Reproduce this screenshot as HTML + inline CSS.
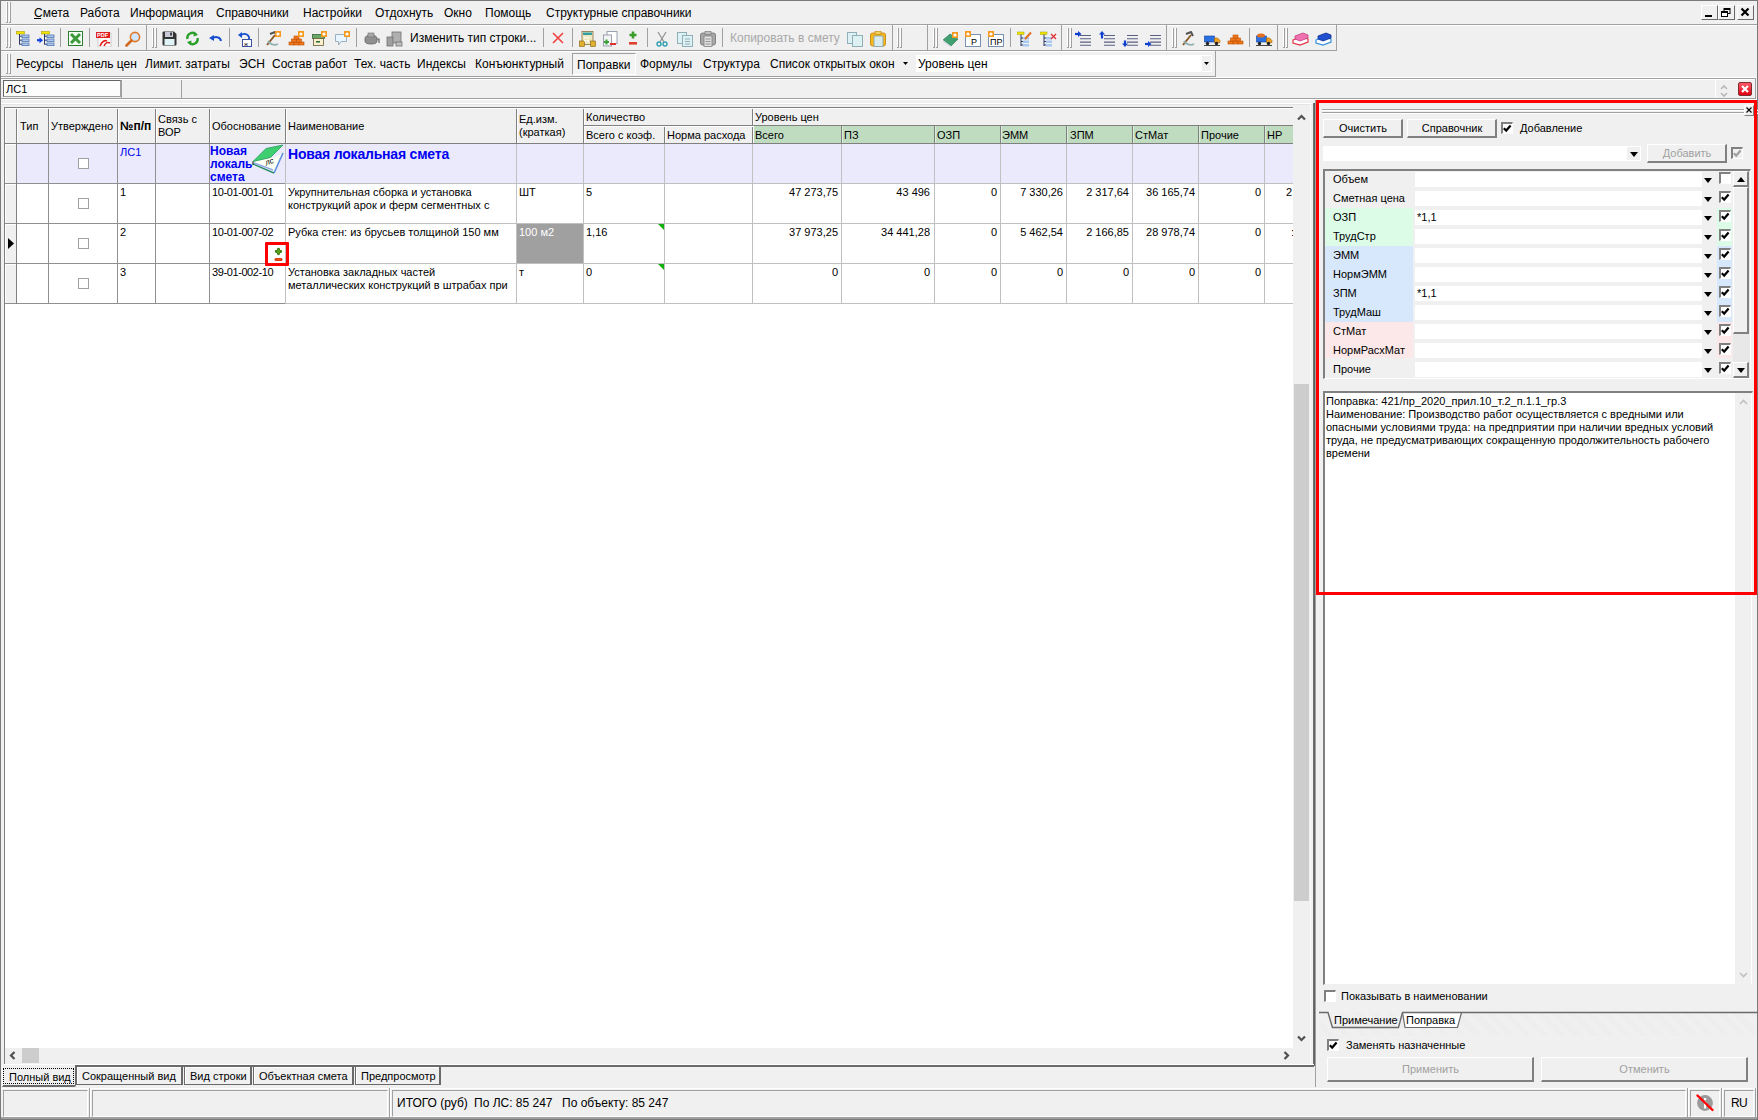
<!DOCTYPE html><html><head><meta charset="utf-8"><style>
html,body{margin:0;padding:0}
body{width:1758px;height:1120px;overflow:hidden;background:#f0f0f0;position:relative;font-family:"Liberation Sans",sans-serif}
div,span,svg{position:absolute;box-sizing:border-box}
.t{white-space:nowrap}
</style></head><body>
<div style="left:0px;top:0px;width:1758px;height:1px;background:#7a7a7a"></div>
<div style="left:0px;top:0px;width:1px;height:1120px;background:#7a7a7a"></div>
<div style="left:1757px;top:0px;width:1px;height:1120px;background:#7a7a7a"></div>
<div style="left:6px;top:2px;width:1px;height:21px;background:#ffffff"></div>
<div style="left:7px;top:2px;width:1px;height:21px;background:#a0a0a0"></div>
<div style="left:6px;top:22px;width:1px;height:1px;background:#a0a0a0"></div>
<div style="left:9px;top:2px;width:1px;height:21px;background:#ffffff"></div>
<div style="left:10px;top:2px;width:1px;height:21px;background:#a0a0a0"></div>
<div style="left:9px;top:22px;width:1px;height:1px;background:#a0a0a0"></div>
<div style="left:1px;top:24px;width:1756px;height:1px;background:#a0a0a0"></div>
<div style="left:1px;top:25px;width:1756px;height:1px;background:#ffffff"></div>
<span class="t" style="left:34px;top:7px;font-size:12px;line-height:12px;font-weight:400;color:#000;">Смета</span>
<span class="t" style="left:80px;top:7px;font-size:12px;line-height:12px;font-weight:400;color:#000;">Работа</span>
<span class="t" style="left:130px;top:7px;font-size:12px;line-height:12px;font-weight:400;color:#000;">Информация</span>
<span class="t" style="left:216px;top:7px;font-size:12px;line-height:12px;font-weight:400;color:#000;">Справочники</span>
<span class="t" style="left:303px;top:7px;font-size:12px;line-height:12px;font-weight:400;color:#000;">Настройки</span>
<span class="t" style="left:375px;top:7px;font-size:12px;line-height:12px;font-weight:400;color:#000;">Отдохнуть</span>
<span class="t" style="left:444px;top:7px;font-size:12px;line-height:12px;font-weight:400;color:#000;">Окно</span>
<span class="t" style="left:485px;top:7px;font-size:12px;line-height:12px;font-weight:400;color:#000;">Помощь</span>
<span class="t" style="left:546px;top:7px;font-size:12px;line-height:12px;font-weight:400;color:#000;">Структурные справочники</span>
<div style="left:34px;top:18px;width:7px;height:1px;background:#000"></div>
<div style="left:1701px;top:5px;width:17px;height:15px;background:#f0f0f0;border-top:1px solid #fff;border-left:1px solid #fff;border-right:1px solid #6a6a6a;border-bottom:1px solid #6a6a6a"></div>
<div style="left:1718px;top:5px;width:17px;height:15px;background:#f0f0f0;border-top:1px solid #fff;border-left:1px solid #fff;border-right:1px solid #6a6a6a;border-bottom:1px solid #6a6a6a"></div>
<div style="left:1737px;top:5px;width:17px;height:15px;background:#f0f0f0;border-top:1px solid #fff;border-left:1px solid #fff;border-right:1px solid #6a6a6a;border-bottom:1px solid #6a6a6a"></div>
<div style="left:1705px;top:15px;width:7px;height:2px;background:#000"></div>
<svg style="position:absolute;left:1721px;top:8px" width="11" height="10" viewBox="0 0 11 10"><rect x="3" y="0.5" width="6" height="5" fill="none" stroke="#000" stroke-width="1"/><rect x="3" y="0" width="6" height="2" fill="#000"/><rect x="0.5" y="3.5" width="6" height="5" fill="#fff" stroke="#000" stroke-width="1"/><rect x="0" y="3" width="7" height="2" fill="#000"/></svg>
<svg style="position:absolute;left:1740px;top:7px" width="10" height="10" viewBox="0 0 10 10"><path d="M1.5 1.5L8.5 8.5M8.5 1.5L1.5 8.5" stroke="#000" stroke-width="2.2"/></svg>
<div style="left:1px;top:50px;width:1336px;height:1px;background:#a0a0a0"></div>
<div style="left:1px;top:51px;width:1215px;height:1px;background:#ffffff"></div>
<div style="left:1336px;top:25px;width:1px;height:26px;background:#a0a0a0"></div>
<div style="left:6px;top:28px;width:1px;height:20px;background:#ffffff"></div>
<div style="left:7px;top:28px;width:1px;height:20px;background:#a0a0a0"></div>
<div style="left:6px;top:47px;width:1px;height:1px;background:#a0a0a0"></div>
<div style="left:9px;top:28px;width:1px;height:20px;background:#ffffff"></div>
<div style="left:10px;top:28px;width:1px;height:20px;background:#a0a0a0"></div>
<div style="left:9px;top:47px;width:1px;height:1px;background:#a0a0a0"></div>
<div style="left:152px;top:28px;width:1px;height:20px;background:#ffffff"></div>
<div style="left:153px;top:28px;width:1px;height:20px;background:#a0a0a0"></div>
<div style="left:152px;top:47px;width:1px;height:1px;background:#a0a0a0"></div>
<div style="left:155px;top:28px;width:1px;height:20px;background:#ffffff"></div>
<div style="left:156px;top:28px;width:1px;height:20px;background:#a0a0a0"></div>
<div style="left:155px;top:47px;width:1px;height:1px;background:#a0a0a0"></div>
<div style="left:897px;top:28px;width:1px;height:20px;background:#ffffff"></div>
<div style="left:898px;top:28px;width:1px;height:20px;background:#a0a0a0"></div>
<div style="left:897px;top:47px;width:1px;height:1px;background:#a0a0a0"></div>
<div style="left:900px;top:28px;width:1px;height:20px;background:#ffffff"></div>
<div style="left:901px;top:28px;width:1px;height:20px;background:#a0a0a0"></div>
<div style="left:900px;top:47px;width:1px;height:1px;background:#a0a0a0"></div>
<div style="left:933px;top:28px;width:1px;height:20px;background:#ffffff"></div>
<div style="left:934px;top:28px;width:1px;height:20px;background:#a0a0a0"></div>
<div style="left:933px;top:47px;width:1px;height:1px;background:#a0a0a0"></div>
<div style="left:936px;top:28px;width:1px;height:20px;background:#ffffff"></div>
<div style="left:937px;top:28px;width:1px;height:20px;background:#a0a0a0"></div>
<div style="left:936px;top:47px;width:1px;height:1px;background:#a0a0a0"></div>
<div style="left:1067px;top:28px;width:1px;height:20px;background:#ffffff"></div>
<div style="left:1068px;top:28px;width:1px;height:20px;background:#a0a0a0"></div>
<div style="left:1067px;top:47px;width:1px;height:1px;background:#a0a0a0"></div>
<div style="left:1070px;top:28px;width:1px;height:20px;background:#ffffff"></div>
<div style="left:1071px;top:28px;width:1px;height:20px;background:#a0a0a0"></div>
<div style="left:1070px;top:47px;width:1px;height:1px;background:#a0a0a0"></div>
<div style="left:1172px;top:28px;width:1px;height:20px;background:#ffffff"></div>
<div style="left:1173px;top:28px;width:1px;height:20px;background:#a0a0a0"></div>
<div style="left:1172px;top:47px;width:1px;height:1px;background:#a0a0a0"></div>
<div style="left:1175px;top:28px;width:1px;height:20px;background:#ffffff"></div>
<div style="left:1176px;top:28px;width:1px;height:20px;background:#a0a0a0"></div>
<div style="left:1175px;top:47px;width:1px;height:1px;background:#a0a0a0"></div>
<div style="left:1283px;top:28px;width:1px;height:20px;background:#ffffff"></div>
<div style="left:1284px;top:28px;width:1px;height:20px;background:#a0a0a0"></div>
<div style="left:1283px;top:47px;width:1px;height:1px;background:#a0a0a0"></div>
<div style="left:1286px;top:28px;width:1px;height:20px;background:#ffffff"></div>
<div style="left:1287px;top:28px;width:1px;height:20px;background:#a0a0a0"></div>
<div style="left:1286px;top:47px;width:1px;height:1px;background:#a0a0a0"></div>
<div style="left:146px;top:25px;width:1px;height:25px;background:#a0a0a0"></div>
<div style="left:892px;top:25px;width:1px;height:25px;background:#a0a0a0"></div>
<div style="left:927px;top:25px;width:1px;height:25px;background:#a0a0a0"></div>
<div style="left:1061px;top:25px;width:1px;height:25px;background:#a0a0a0"></div>
<div style="left:1166px;top:25px;width:1px;height:25px;background:#a0a0a0"></div>
<div style="left:1277px;top:25px;width:1px;height:25px;background:#a0a0a0"></div>
<div style="left:1336px;top:25px;width:1px;height:25px;background:#a0a0a0"></div>
<div style="left:60px;top:28px;width:1px;height:19px;background:#a0a0a0"></div>
<div style="left:89px;top:28px;width:1px;height:19px;background:#a0a0a0"></div>
<div style="left:118px;top:28px;width:1px;height:19px;background:#a0a0a0"></div>
<div style="left:229px;top:28px;width:1px;height:19px;background:#a0a0a0"></div>
<div style="left:258px;top:28px;width:1px;height:19px;background:#a0a0a0"></div>
<div style="left:356px;top:28px;width:1px;height:19px;background:#a0a0a0"></div>
<div style="left:543px;top:28px;width:1px;height:19px;background:#a0a0a0"></div>
<div style="left:572px;top:28px;width:1px;height:19px;background:#a0a0a0"></div>
<div style="left:647px;top:28px;width:1px;height:19px;background:#a0a0a0"></div>
<div style="left:722px;top:28px;width:1px;height:19px;background:#a0a0a0"></div>
<div style="left:1010px;top:28px;width:1px;height:19px;background:#a0a0a0"></div>
<div style="left:1249px;top:28px;width:1px;height:19px;background:#a0a0a0"></div>
<svg style="position:absolute;left:16px;top:31px" width="18" height="16" viewBox="0 0 18 16"><rect x="0.5" y="0.5" width="8" height="2.5" fill="#f4e400" stroke="#b0a000" stroke-width="0.6"/><path d="M3.5 3V13.5M3.5 5.2H6 M3.5 9.2H6 M3.5 13.2H6" stroke="#2a3a6a" stroke-width="1" fill="none"/><rect x="6" y="4" width="7" height="2.6" fill="#a8c8f0" stroke="#5878b0" stroke-width="0.8"/><rect x="6" y="8" width="7" height="2.6" fill="#a8c8f0" stroke="#5878b0" stroke-width="0.8"/><rect x="6" y="12" width="7" height="2.6" fill="#a8c8f0" stroke="#5878b0" stroke-width="0.8"/></svg>
<svg style="position:absolute;left:37px;top:31px" width="18" height="16" viewBox="0 0 18 16"><rect x="4.5" y="0.5" width="8" height="2.5" fill="#f4e400" stroke="#b0a000" stroke-width="0.6"/><path d="M7.5 3V13.5M7.5 5.2H10 M7.5 9.2H10 M7.5 13.2H10" stroke="#2a3a6a" stroke-width="1" fill="none"/><rect x="10" y="4" width="7" height="2.6" fill="#a8c8f0" stroke="#5878b0" stroke-width="0.8"/><rect x="10" y="8" width="7" height="2.6" fill="#a8c8f0" stroke="#5878b0" stroke-width="0.8"/><rect x="10" y="12" width="7" height="2.6" fill="#a8c8f0" stroke="#5878b0" stroke-width="0.8"/><path d="M0 9.2H3" stroke="#1040e0" stroke-width="2.2"/><path d="M2.5 6.2L6 9.2L2.5 12.2Z" fill="#1040e0"/></svg>
<svg style="position:absolute;left:68px;top:31px" width="15" height="15" viewBox="0 0 15 15"><rect x="0.5" y="0.5" width="14" height="14" fill="#f4fff4" stroke="#2e7d32" stroke-width="1"/><path d="M3 3L12 12M12 3L3 12" stroke="#3a9a3a" stroke-width="3"/></svg>
<svg style="position:absolute;left:96px;top:31px" width="16" height="16" viewBox="0 0 16 16"><rect x="2" y="2" width="13" height="14" fill="#fff" stroke="#c0c0c0" stroke-width="0.8"/><rect x="0" y="1" width="14" height="6" fill="#e02020"/><text x="1" y="6.3" font-size="5.5" font-family="Liberation Sans" font-weight="700" fill="#fff">PDF</text><path d="M4 15C6 10 9 9 11 10M8 15C10 11 12 11 14 12" stroke="#e02020" stroke-width="1.6" fill="none"/></svg>
<svg style="position:absolute;left:125px;top:31px" width="16" height="16" viewBox="0 0 16 16"><circle cx="10" cy="6" r="4.6" fill="#cfe6ff" stroke="#e07a2a" stroke-width="1.6"/><path d="M6.5 9.5L1.5 14.5" stroke="#d06a20" stroke-width="2.6" stroke-linecap="round"/></svg>
<svg style="position:absolute;left:162px;top:31px" width="15" height="15" viewBox="0 0 15 15"><path d="M0.5 1.5Q0.5 0.5 1.5 0.5H12L14.5 3V13.5Q14.5 14.5 13.5 14.5H1.5Q0.5 14.5 0.5 13.5Z" fill="#333"/><rect x="3" y="1" width="8" height="5" fill="#c8c8d8"/><rect x="8" y="1.5" width="2" height="3" fill="#444"/><rect x="2.5" y="8" width="10" height="6" fill="#e0f4f8"/></svg>
<svg style="position:absolute;left:185px;top:31px" width="15" height="15" viewBox="0 0 15 15"><path d="M2.5 8A5 5 0 0 1 11 3.5" stroke="#2aa02a" stroke-width="2.4" fill="none"/><path d="M9 0.5L13 4L8.5 5.5Z" fill="#2aa02a"/><path d="M12.5 7A5 5 0 0 1 4 11.5" stroke="#2aa02a" stroke-width="2.4" fill="none"/><path d="M6 14.5L2 11L6.5 9.5Z" fill="#2aa02a"/></svg>
<svg style="position:absolute;left:209px;top:33px" width="13" height="10" viewBox="0 0 13 10"><path d="M3 6A5 4.5 0 0 1 12 8" stroke="#1a50d0" stroke-width="2" fill="none"/><path d="M0 5L5 2L5 8Z" fill="#1a50d0"/></svg>
<svg style="position:absolute;left:238px;top:31px" width="14" height="16" viewBox="0 0 14 16"><path d="M2 5A5 4.5 0 0 1 11 6V8" stroke="#1a50d0" stroke-width="1.8" fill="none"/><path d="M0 4L4 1L4 7Z" fill="#1a50d0"/><rect x="4.5" y="8.5" width="9" height="7" fill="#fff" stroke="#3a50a0" stroke-width="1"/><text x="6" y="14.5" font-size="6" font-family="Liberation Sans" fill="#222">ж</text></svg>
<svg style="position:absolute;left:265px;top:31px" width="17" height="16" viewBox="0 0 17 16"><path d="M2 14L10 4" stroke="#8a5a2a" stroke-width="2"/><path d="M5 3L10 1L12 5" stroke="#555" stroke-width="2" fill="none"/><path d="M3 10A7 6 0 0 0 13 13" stroke="#90b0b0" stroke-width="1.8" fill="none"/><rect x="10" y="0" width="6" height="6" fill="#f59a1e"/><circle cx="13" cy="3" r="1.6" fill="#fff"/></svg>
<svg style="position:absolute;left:288px;top:31px" width="17" height="16" viewBox="0 0 17 16"><g fill="#f07820" stroke="#c05000" stroke-width="0.6"><rect x="1" y="11" width="5" height="3"/><rect x="6" y="11" width="5" height="3"/><rect x="11" y="11" width="5" height="3"/><rect x="3.5" y="8" width="5" height="3"/><rect x="8.5" y="8" width="5" height="3"/><rect x="6" y="5" width="5" height="3"/></g><rect x="10" y="0" width="6" height="6" fill="#f59a1e"/><circle cx="13" cy="3" r="1.6" fill="#fff"/></svg>
<svg style="position:absolute;left:312px;top:31px" width="16" height="16" viewBox="0 0 16 16"><rect x="0.5" y="3.5" width="12" height="4" fill="#6aa86a" stroke="#3a6a3a" stroke-width="0.8"/><rect x="1.5" y="7.5" width="10" height="7" fill="#f8f0d0" stroke="#6a5a30" stroke-width="0.8"/><rect x="4" y="10" width="4" height="1.5" fill="#2a6a2a"/><rect x="9" y="0" width="6" height="6" fill="#f59a1e"/><circle cx="12" cy="3" r="1.6" fill="#fff"/></svg>
<svg style="position:absolute;left:334px;top:31px" width="17" height="16" viewBox="0 0 17 16"><path d="M1.5 3.5H12.5V10.5H7L4.5 14V10.5H1.5Z" fill="#e8f6ff" stroke="#9ab0c0" stroke-width="1"/><rect x="10" y="0" width="6" height="6" fill="#f59a1e"/><circle cx="13" cy="3" r="1.6" fill="#fff"/></svg>
<svg style="position:absolute;left:363px;top:31px" width="17" height="16" viewBox="0 0 17 16"><path d="M2 8Q2 4 8 4Q14 4 14 8V10Q14 13 8 13Q2 13 2 10Z" fill="#909090" stroke="#606060" stroke-width="0.8"/><rect x="5" y="2" width="6" height="4" fill="#a8a8a8" stroke="#707070" stroke-width="0.6"/><path d="M14 8H16V12" stroke="#606060" stroke-width="1.2" fill="none"/></svg>
<svg style="position:absolute;left:386px;top:31px" width="17" height="16" viewBox="0 0 17 16"><rect x="6" y="1" width="9" height="11" fill="#b0b0b0" stroke="#707070" stroke-width="0.8"/><rect x="1" y="6" width="6" height="9" fill="#a0a0a0" stroke="#707070" stroke-width="0.8"/><rect x="10" y="11" width="6" height="4" fill="#c0c0c0" stroke="#707070" stroke-width="0.8"/></svg>
<span class="t" style="left:410px;top:32px;font-size:12px;line-height:12px;font-weight:400;color:#000;">Изменить тип строки...</span>
<svg style="position:absolute;left:552px;top:32px" width="12" height="12" viewBox="0 0 12 12"><path d="M1 1L11 11M11 1L1 11" stroke="#f04040" stroke-width="1.6"/></svg>
<svg style="position:absolute;left:579px;top:31px" width="17" height="16" viewBox="0 0 17 16"><rect x="3" y="0.5" width="11" height="13" fill="#f0e8c0" stroke="#8a7040" stroke-width="0.8"/><rect x="4" y="1.5" width="9" height="2.5" fill="#30a0a0"/><g fill="#e0b030" stroke="#806010" stroke-width="0.6"><rect x="0.5" y="10" width="5" height="5.5"/><rect x="11.5" y="10" width="5" height="5.5"/></g><g fill="#fff"><rect x="5" y="6" width="2" height="1.5"/><rect x="8" y="6" width="2" height="1.5"/><rect x="5" y="9" width="2" height="1.5"/><rect x="8" y="9" width="2" height="1.5"/></g></svg>
<svg style="position:absolute;left:603px;top:31px" width="15" height="16" viewBox="0 0 15 16"><rect x="4" y="0.5" width="10" height="12" fill="#fff" stroke="#9aa0b0" stroke-width="1"/><rect x="0.5" y="4" width="8" height="11" fill="#f4f4f4" stroke="#9aa0b0" stroke-width="1"/><path d="M1 11H6M3.5 8.5V13.5" stroke="#3aa03a" stroke-width="2"/><rect x="7" y="12" width="6" height="2" fill="#e03030"/></svg>
<svg style="position:absolute;left:629px;top:31px" width="8" height="16" viewBox="0 0 8 16"><path d="M0.5 4H7.5M4 0.5V7.5" stroke="#3a9a2a" stroke-width="2.6"/><rect x="0" y="11" width="8" height="2.6" fill="#e04030"/></svg>
<svg style="position:absolute;left:656px;top:31px" width="12" height="16" viewBox="0 0 12 16"><path d="M2 1L8 11M10 1L4 11" stroke="#909090" stroke-width="1.2"/><circle cx="3" cy="13" r="2" fill="none" stroke="#30a0b0" stroke-width="1.4"/><circle cx="9" cy="13" r="2" fill="none" stroke="#30a0b0" stroke-width="1.4"/></svg>
<svg style="position:absolute;left:677px;top:31px" width="16" height="16" viewBox="0 0 16 16"><rect x="0.5" y="1.5" width="9" height="11" fill="#ddf0f4" stroke="#90b0b8" stroke-width="1"/><rect x="5.5" y="4.5" width="10" height="11" fill="#ddf0f4" stroke="#90b0b8" stroke-width="1"/><path d="M8 8H13M8 10.5H13M8 13H13" stroke="#90b0b8" stroke-width="1"/></svg>
<svg style="position:absolute;left:700px;top:31px" width="16" height="16" viewBox="0 0 16 16"><rect x="0.5" y="2" width="15" height="12" rx="2" fill="#a8a8a8" stroke="#707070" stroke-width="0.8"/><rect x="5" y="0.5" width="6" height="3" fill="#c0c0c0" stroke="#707070" stroke-width="0.6"/><rect x="4" y="5" width="8" height="10.5" fill="#e0e0e0" stroke="#808080" stroke-width="0.8"/><path d="M5.5 8H10.5M5.5 10.5H10.5M5.5 13H10.5" stroke="#808080" stroke-width="0.8"/></svg>
<span class="t" style="left:730px;top:32px;font-size:12px;line-height:12px;font-weight:400;color:#a8a8a8;">Копировать в смету</span>
<svg style="position:absolute;left:847px;top:31px" width="16" height="16" viewBox="0 0 16 16"><rect x="0.5" y="1.5" width="9" height="11" fill="#ddf0f4" stroke="#90b0b8" stroke-width="1"/><rect x="5.5" y="4.5" width="10" height="11" fill="#ddf0f4" stroke="#90b0b8" stroke-width="1"/></svg>
<svg style="position:absolute;left:870px;top:31px" width="16" height="16" viewBox="0 0 16 16"><rect x="0.5" y="2" width="15" height="13" rx="2" fill="#f8b820" stroke="#c08000" stroke-width="0.8"/><rect x="5" y="0.5" width="6" height="3" fill="#f0d060" stroke="#c08000" stroke-width="0.6"/><rect x="4" y="5" width="9" height="10.5" fill="#d8ecf0" stroke="#80a0a8" stroke-width="0.8"/></svg>
<svg style="position:absolute;left:942px;top:31px" width="17" height="16" viewBox="0 0 17 16"><path d="M1 9L8 3L16 8L9 15Z" fill="#40a070" stroke="#2a7050" stroke-width="0.6"/><path d="M1 9L9 15L9 16L1 11Z" fill="#d0d8e0"/><rect x="10" y="1" width="6" height="6" fill="#f59a1e"/><circle cx="13" cy="4" r="1.6" fill="#fff"/></svg>
<svg style="position:absolute;left:965px;top:31px" width="17" height="16" viewBox="0 0 17 16"><rect x="0.5" y="3.5" width="15" height="12" fill="#fff" stroke="#7a90b0" stroke-width="1"/><text x="6" y="14" font-size="9" font-family="Liberation Sans" fill="#000">Р</text><rect x="0" y="0" width="6" height="6" fill="#f59a1e"/><circle cx="3" cy="3" r="1.6" fill="#fff"/></svg>
<svg style="position:absolute;left:988px;top:31px" width="17" height="16" viewBox="0 0 17 16"><rect x="0.5" y="3.5" width="15" height="12" fill="#fff" stroke="#7a90b0" stroke-width="1"/><text x="2" y="14" font-size="9" font-family="Liberation Sans" fill="#000">ПР</text><rect x="0" y="0" width="6" height="6" fill="#f59a1e"/><circle cx="3" cy="3" r="1.6" fill="#fff"/></svg>
<svg style="position:absolute;left:1017px;top:31px" width="16" height="16" viewBox="0 0 16 16"><rect x="0" y="1" width="7" height="2.5" fill="#f4e400" stroke="#a0a000" stroke-width="0.5"/><path d="M4 3.5V15M4 7H6M4 10.5H6M4 14H6" stroke="#2a3a6a" stroke-width="1" fill="none"/><rect x="6" y="6" width="6" height="2.5" fill="#a8c8f0"/><rect x="6" y="9.5" width="6" height="2.5" fill="#a8c8f0"/><rect x="6" y="13" width="6" height="2.5" fill="#a8c8f0"/><path d="M8 8L14 1.5" stroke="#e07020" stroke-width="2"/></svg>
<svg style="position:absolute;left:1040px;top:31px" width="17" height="16" viewBox="0 0 17 16"><rect x="0" y="1" width="7" height="2.5" fill="#f4e400" stroke="#a0a000" stroke-width="0.5"/><path d="M4 3.5V15M4 7H6M4 10.5H6M4 14H6" stroke="#2a3a6a" stroke-width="1" fill="none"/><rect x="6" y="6" width="6" height="2.5" fill="#a8c8f0"/><rect x="6" y="9.5" width="6" height="2.5" fill="#a8c8f0"/><rect x="6" y="13" width="6" height="2.5" fill="#a8c8f0"/><path d="M11 3L16 8M16 3L11 8" stroke="#e03030" stroke-width="1.3"/></svg>
<svg style="position:absolute;left:1075px;top:31px" width="17" height="16" viewBox="0 0 17 16"><path d="M5 4.5H16M5 7.8H16M5 11.1H16M5 14.2H16" stroke="#5a6080" stroke-width="1.1"/><path d="M0 3H4" stroke="#1040d0" stroke-width="2.2"/><path d="M3 0L6.5 3L3 6Z" fill="#1040d0"/></svg>
<svg style="position:absolute;left:1099px;top:31px" width="17" height="16" viewBox="0 0 17 16"><path d="M5 4.5H16M5 7.8H16M5 11.1H16M5 14.2H16" stroke="#5a6080" stroke-width="1.1"/><path d="M3 7.5V3" stroke="#1040d0" stroke-width="2.2"/><path d="M0 3.5L3 0L6 3.5Z" fill="#1040d0"/></svg>
<svg style="position:absolute;left:1122px;top:31px" width="17" height="16" viewBox="0 0 17 16"><path d="M5 4.5H16M5 7.8H16M5 11.1H16M5 14.2H16" stroke="#5a6080" stroke-width="1.1"/><path d="M3 9.5V13" stroke="#1040d0" stroke-width="2.2"/><path d="M0 12.5L3 16L6 12.5Z" fill="#1040d0"/></svg>
<svg style="position:absolute;left:1145px;top:31px" width="17" height="16" viewBox="0 0 17 16"><path d="M5 4.5H16M5 7.8H16M5 11.1H16M5 14.2H16" stroke="#5a6080" stroke-width="1.1"/><path d="M0 13H4" stroke="#1040d0" stroke-width="2.2"/><path d="M3 10L6.5 13L3 16Z" fill="#1040d0"/></svg>
<svg style="position:absolute;left:1181px;top:31px" width="16" height="16" viewBox="0 0 16 16"><path d="M2 14L10 4" stroke="#8a5a2a" stroke-width="2"/><path d="M5 3L10 1L12 5" stroke="#555" stroke-width="2" fill="none"/><path d="M3 10A7 6 0 0 0 13 13" stroke="#90b0b0" stroke-width="1.8" fill="none"/></svg>
<svg style="position:absolute;left:1204px;top:31px" width="17" height="16" viewBox="0 0 17 16"><rect x="0.5" y="5" width="10" height="6" fill="#2a70e0" stroke="#1040a0" stroke-width="0.6"/><path d="M10.5 7H13.5L16 9.5V11.5H10.5Z" fill="#f0a020" stroke="#a06000" stroke-width="0.6"/><circle cx="3.5" cy="12.5" r="1.7" fill="#222"/><circle cx="12.5" cy="12.5" r="1.7" fill="#222"/><rect x="0" y="14" width="16" height="1" fill="#444"/></svg>
<svg style="position:absolute;left:1256px;top:31px" width="17" height="16" viewBox="0 0 17 16"><rect x="0.5" y="5" width="10" height="6" fill="#2a70e0" stroke="#1040a0" stroke-width="0.6"/><path d="M10.5 7H13.5L16 9.5V11.5H10.5Z" fill="#f0a020" stroke="#a06000" stroke-width="0.6"/><circle cx="3.5" cy="12.5" r="1.7" fill="#222"/><circle cx="12.5" cy="12.5" r="1.7" fill="#222"/><rect x="0" y="14" width="16" height="1" fill="#444"/><ellipse cx="5" cy="4.5" rx="4" ry="2" fill="#e07020"/></svg>
<svg style="position:absolute;left:1227px;top:31px" width="17" height="16" viewBox="0 0 17 16"><g fill="#f07820" stroke="#c05000" stroke-width="0.6"><rect x="1" y="10" width="5" height="3"/><rect x="6" y="10" width="5" height="3"/><rect x="11" y="10" width="5" height="3"/><rect x="3.5" y="7" width="5" height="3"/><rect x="8.5" y="7" width="5" height="3"/><rect x="6" y="4" width="5" height="3"/></g></svg>
<svg style="position:absolute;left:1292px;top:31px" width="17" height="16" viewBox="0 0 17 16"><path d="M1 9L9 6L16 8V11L8 14L1 12Z" fill="#fff" stroke="#e03040" stroke-width="1.2"/><path d="M3 5L11 2L16 4V7L8 10L3 8Z" fill="#f070b0" stroke="#c04080" stroke-width="0.8"/></svg>
<svg style="position:absolute;left:1315px;top:31px" width="17" height="16" viewBox="0 0 17 16"><path d="M1 9L9 6L16 8V11L8 14L1 12Z" fill="#fff" stroke="#3090e0" stroke-width="1.2"/><path d="M3 5L11 2L16 4V7L8 10L3 8Z" fill="#2050d0" stroke="#103090" stroke-width="0.8"/></svg>
<div style="left:6px;top:54px;width:1px;height:20px;background:#ffffff"></div>
<div style="left:7px;top:54px;width:1px;height:20px;background:#a0a0a0"></div>
<div style="left:6px;top:73px;width:1px;height:1px;background:#a0a0a0"></div>
<div style="left:9px;top:54px;width:1px;height:20px;background:#ffffff"></div>
<div style="left:10px;top:54px;width:1px;height:20px;background:#a0a0a0"></div>
<div style="left:9px;top:73px;width:1px;height:1px;background:#a0a0a0"></div>
<div style="left:1px;top:76px;width:1215px;height:1px;background:#a0a0a0"></div>
<div style="left:1px;top:77px;width:1755px;height:1px;background:#ffffff"></div>
<div style="left:1215px;top:51px;width:1px;height:26px;background:#a0a0a0"></div>
<div style="left:572px;top:53px;width:64px;height:22px;border-top:1px solid #a0a0a0;border-left:1px solid #a0a0a0;border-right:1px solid #fff;border-bottom:1px solid #fff;background:#f4f4f4"></div>
<span class="t" style="left:16px;top:58px;font-size:12px;line-height:12px;font-weight:400;color:#000;">Ресурсы</span>
<span class="t" style="left:72px;top:58px;font-size:12px;line-height:12px;font-weight:400;color:#000;">Панель цен</span>
<span class="t" style="left:145px;top:58px;font-size:12px;line-height:12px;font-weight:400;color:#000;">Лимит. затраты</span>
<span class="t" style="left:239px;top:58px;font-size:12px;line-height:12px;font-weight:400;color:#000;">ЭСН</span>
<span class="t" style="left:272px;top:58px;font-size:12px;line-height:12px;font-weight:400;color:#000;">Состав работ</span>
<span class="t" style="left:354px;top:58px;font-size:12px;line-height:12px;font-weight:400;color:#000;">Тех. часть</span>
<span class="t" style="left:417px;top:58px;font-size:12px;line-height:12px;font-weight:400;color:#000;">Индексы</span>
<span class="t" style="left:475px;top:58px;font-size:12px;line-height:12px;font-weight:400;color:#000;">Конъюнктурный</span>
<span class="t" style="left:577px;top:59px;font-size:12px;line-height:12px;font-weight:400;color:#000;">Поправки</span>
<span class="t" style="left:640px;top:58px;font-size:12px;line-height:12px;font-weight:400;color:#000;">Формулы</span>
<span class="t" style="left:703px;top:58px;font-size:12px;line-height:12px;font-weight:400;color:#000;">Структура</span>
<span class="t" style="left:770px;top:58px;font-size:12px;line-height:12px;font-weight:400;color:#000;">Список открытых окон</span>
<svg style="position:absolute;left:903px;top:62px" width="5" height="3" viewBox="0 0 5 3"><path d="M0 0H5L2.5 3Z" fill="#000"/></svg>
<div style="left:916px;top:55px;width:296px;height:17px;background:#fff"></div>
<span class="t" style="left:918px;top:58px;font-size:12px;line-height:12px;font-weight:400;color:#000;">Уровень цен</span>
<div style="left:1202px;top:56px;width:9px;height:15px;background:#f0f0f0"></div>
<svg style="position:absolute;left:1204px;top:62px" width="5" height="3" viewBox="0 0 5 3"><path d="M0 0H5L2.5 3Z" fill="#000"/></svg>
<div style="left:1px;top:78px;width:1755px;height:1px;background:#a0a0a0"></div>
<div style="left:1px;top:79px;width:1755px;height:1px;background:#fff"></div>
<div style="left:1px;top:98px;width:1755px;height:1px;background:#a0a0a0"></div>
<div style="left:1px;top:99px;width:1755px;height:1px;background:#fff"></div>
<div style="left:1755px;top:78px;width:1px;height:21px;background:#a0a0a0"></div>
<div style="left:3px;top:80px;width:118px;height:17px;background:#fcfcfc;border:1px solid #646464;border-right-color:#a0a0a0;border-bottom-color:#a0a0a0"></div>
<span class="t" style="left:6px;top:84px;font-size:11px;line-height:11px;font-weight:400;color:#000;">ЛС1</span>
<div style="left:121px;top:80px;width:1px;height:18px;background:#a0a0a0"></div>
<div style="left:181px;top:80px;width:1px;height:18px;background:#a0a0a0"></div>
<div style="left:1715px;top:80px;width:1px;height:18px;background:#fff"></div>
<svg style="position:absolute;left:1720px;top:84px" width="8" height="14" viewBox="0 0 8 14"><path d="M1 5L4 2L7 5M1 9L4 12L7 9" stroke="#b8b8b8" stroke-width="1.6" fill="none"/></svg>
<div style="left:1738px;top:82px;width:14px;height:14px;background:linear-gradient(#ff5a6a,#e00010);border:1px solid #803030;border-radius:2px"></div>
<svg style="position:absolute;left:1741px;top:85px" width="8" height="8" viewBox="0 0 8 8"><path d="M1 1L7 7M7 1L1 7" stroke="#fff" stroke-width="2.2"/></svg>
<div style="left:1px;top:103px;width:1312px;height:1px;background:#ffffff"></div>
<div style="left:1px;top:104px;width:1312px;height:1px;background:#e4e4e4"></div>
<div style="left:5px;top:108px;width:1288px;height:940px;background:#fff"></div>
<div style="left:4px;top:107px;width:1px;height:957px;background:#808080"></div>
<div style="left:4px;top:107px;width:1306px;height:1px;background:#808080"></div>
<div style="left:5px;top:108px;width:1288px;height:35px;background:#f0f0f0"></div>
<div style="left:753px;top:126px;width:540px;height:17px;background:#c0dcc0"></div>
<div style="left:16px;top:108px;width:1px;height:35px;background:#808080"></div>
<div style="left:17px;top:108px;width:1px;height:35px;background:#ffffff"></div>
<div style="left:48px;top:108px;width:1px;height:35px;background:#808080"></div>
<div style="left:49px;top:108px;width:1px;height:35px;background:#ffffff"></div>
<div style="left:117px;top:108px;width:1px;height:35px;background:#808080"></div>
<div style="left:118px;top:108px;width:1px;height:35px;background:#ffffff"></div>
<div style="left:155px;top:108px;width:1px;height:35px;background:#808080"></div>
<div style="left:156px;top:108px;width:1px;height:35px;background:#ffffff"></div>
<div style="left:209px;top:108px;width:1px;height:35px;background:#808080"></div>
<div style="left:210px;top:108px;width:1px;height:35px;background:#ffffff"></div>
<div style="left:285px;top:108px;width:1px;height:35px;background:#808080"></div>
<div style="left:286px;top:108px;width:1px;height:35px;background:#ffffff"></div>
<div style="left:516px;top:108px;width:1px;height:35px;background:#808080"></div>
<div style="left:517px;top:108px;width:1px;height:35px;background:#ffffff"></div>
<div style="left:583px;top:108px;width:1px;height:35px;background:#808080"></div>
<div style="left:584px;top:108px;width:1px;height:35px;background:#ffffff"></div>
<div style="left:664px;top:126px;width:1px;height:17px;background:#808080"></div>
<div style="left:665px;top:126px;width:1px;height:17px;background:#ffffff"></div>
<div style="left:752px;top:108px;width:1px;height:35px;background:#808080"></div>
<div style="left:753px;top:108px;width:1px;height:35px;background:#ffffff"></div>
<div style="left:841px;top:126px;width:1px;height:17px;background:#808080"></div>
<div style="left:842px;top:126px;width:1px;height:17px;background:#d8ecd8"></div>
<div style="left:934px;top:126px;width:1px;height:17px;background:#808080"></div>
<div style="left:935px;top:126px;width:1px;height:17px;background:#d8ecd8"></div>
<div style="left:1000px;top:126px;width:1px;height:17px;background:#808080"></div>
<div style="left:1001px;top:126px;width:1px;height:17px;background:#d8ecd8"></div>
<div style="left:1066px;top:126px;width:1px;height:17px;background:#808080"></div>
<div style="left:1067px;top:126px;width:1px;height:17px;background:#d8ecd8"></div>
<div style="left:1132px;top:126px;width:1px;height:17px;background:#808080"></div>
<div style="left:1133px;top:126px;width:1px;height:17px;background:#d8ecd8"></div>
<div style="left:1198px;top:126px;width:1px;height:17px;background:#808080"></div>
<div style="left:1199px;top:126px;width:1px;height:17px;background:#d8ecd8"></div>
<div style="left:1264px;top:126px;width:1px;height:17px;background:#808080"></div>
<div style="left:1265px;top:126px;width:1px;height:17px;background:#d8ecd8"></div>
<div style="left:5px;top:108px;width:1px;height:35px;background:#ffffff"></div>
<div style="left:5px;top:108px;width:1288px;height:1px;background:#ffffff"></div>
<div style="left:583px;top:125px;width:710px;height:1px;background:#808080"></div>
<div style="left:584px;top:126px;width:169px;height:1px;background:#ffffff"></div>
<div style="left:5px;top:143px;width:1288px;height:1px;background:#808080"></div>
<span class="t" style="left:20px;top:121px;font-size:11px;line-height:11px;font-weight:400;color:#000;">Тип</span>
<span class="t" style="left:51px;top:121px;font-size:11px;line-height:11px;font-weight:400;color:#000;">Утверждено</span>
<span class="t" style="left:120px;top:120px;font-size:12px;line-height:12px;font-weight:700;color:#000;">№п/п</span>
<span class="t" style="left:158px;top:114px;font-size:11px;line-height:11px;font-weight:400;color:#000;">Связь с</span>
<span class="t" style="left:158px;top:127px;font-size:11px;line-height:11px;font-weight:400;color:#000;">ВОР</span>
<span class="t" style="left:212px;top:121px;font-size:11px;line-height:11px;font-weight:400;color:#000;">Обоснование</span>
<span class="t" style="left:288px;top:121px;font-size:11px;line-height:11px;font-weight:400;color:#000;">Наименование</span>
<span class="t" style="left:519px;top:114px;font-size:11px;line-height:11px;font-weight:400;color:#000;">Ед.изм.</span>
<span class="t" style="left:519px;top:127px;font-size:11px;line-height:11px;font-weight:400;color:#000;">(краткая)</span>
<span class="t" style="left:586px;top:112px;font-size:11px;line-height:11px;font-weight:400;color:#000;">Количество</span>
<span class="t" style="left:755px;top:112px;font-size:11px;line-height:11px;font-weight:400;color:#000;">Уровень цен</span>
<span class="t" style="left:586px;top:130px;font-size:11px;line-height:11px;font-weight:400;color:#000;">Всего с коэф.</span>
<span class="t" style="left:667px;top:130px;font-size:11px;line-height:11px;font-weight:400;color:#000;">Норма расхода</span>
<span class="t" style="left:755px;top:130px;font-size:11px;line-height:11px;font-weight:400;color:#000;">Всего</span>
<span class="t" style="left:844px;top:130px;font-size:11px;line-height:11px;font-weight:400;color:#000;">ПЗ</span>
<span class="t" style="left:937px;top:130px;font-size:11px;line-height:11px;font-weight:400;color:#000;">ОЗП</span>
<span class="t" style="left:1002px;top:130px;font-size:11px;line-height:11px;font-weight:400;color:#000;">ЭММ</span>
<span class="t" style="left:1070px;top:130px;font-size:11px;line-height:11px;font-weight:400;color:#000;">ЗПМ</span>
<span class="t" style="left:1135px;top:130px;font-size:11px;line-height:11px;font-weight:400;color:#000;">СтМат</span>
<span class="t" style="left:1201px;top:130px;font-size:11px;line-height:11px;font-weight:400;color:#000;">Прочие</span>
<span class="t" style="left:1267px;top:130px;font-size:11px;line-height:11px;font-weight:400;color:#000;">НР</span>
<div style="left:17px;top:144px;width:1276px;height:39px;background:#eaeafc"></div>
<div style="left:5px;top:144px;width:11px;height:39px;background:#f0f0f0;border-left:1px solid #fff;border-top:1px solid #fff"></div>
<div style="left:5px;top:184px;width:11px;height:39px;background:#f0f0f0;border-left:1px solid #fff;border-top:1px solid #fff"></div>
<div style="left:5px;top:224px;width:11px;height:39px;background:#f0f0f0;border-left:1px solid #fff;border-top:1px solid #fff"></div>
<div style="left:5px;top:264px;width:11px;height:39px;background:#f0f0f0;border-left:1px solid #fff;border-top:1px solid #fff"></div>
<div style="left:5px;top:183px;width:280px;height:1px;background:#909090"></div>
<div style="left:285px;top:183px;width:1008px;height:1px;background:#c0c0c0"></div>
<div style="left:5px;top:223px;width:280px;height:1px;background:#909090"></div>
<div style="left:285px;top:223px;width:1008px;height:1px;background:#c0c0c0"></div>
<div style="left:5px;top:263px;width:280px;height:1px;background:#909090"></div>
<div style="left:285px;top:263px;width:1008px;height:1px;background:#c0c0c0"></div>
<div style="left:5px;top:303px;width:280px;height:1px;background:#909090"></div>
<div style="left:285px;top:303px;width:1008px;height:1px;background:#c0c0c0"></div>
<div style="left:16px;top:144px;width:1px;height:160px;background:#909090"></div>
<div style="left:48px;top:144px;width:1px;height:160px;background:#909090"></div>
<div style="left:117px;top:144px;width:1px;height:160px;background:#909090"></div>
<div style="left:155px;top:144px;width:1px;height:160px;background:#909090"></div>
<div style="left:209px;top:144px;width:1px;height:160px;background:#909090"></div>
<div style="left:285px;top:144px;width:1px;height:160px;background:#c0c0c0"></div>
<div style="left:516px;top:144px;width:1px;height:160px;background:#c0c0c0"></div>
<div style="left:583px;top:144px;width:1px;height:160px;background:#c0c0c0"></div>
<div style="left:664px;top:144px;width:1px;height:160px;background:#c0c0c0"></div>
<div style="left:752px;top:144px;width:1px;height:160px;background:#c0c0c0"></div>
<div style="left:841px;top:144px;width:1px;height:160px;background:#c0c0c0"></div>
<div style="left:934px;top:144px;width:1px;height:160px;background:#c0c0c0"></div>
<div style="left:1000px;top:144px;width:1px;height:160px;background:#c0c0c0"></div>
<div style="left:1066px;top:144px;width:1px;height:160px;background:#c0c0c0"></div>
<div style="left:1132px;top:144px;width:1px;height:160px;background:#c0c0c0"></div>
<div style="left:1198px;top:144px;width:1px;height:160px;background:#c0c0c0"></div>
<div style="left:1264px;top:144px;width:1px;height:160px;background:#c0c0c0"></div>
<div style="left:16px;top:144px;width:1px;height:160px;background:#808080"></div>
<div style="left:517px;top:224px;width:66px;height:39px;background:#a0a0a0"></div>
<svg style="position:absolute;left:658px;top:224px" width="6" height="6" viewBox="0 0 6 6"><path d="M0 0H6V6Z" fill="#10b010"/></svg>
<svg style="position:absolute;left:658px;top:264px" width="6" height="6" viewBox="0 0 6 6"><path d="M0 0H6V6Z" fill="#10b010"/></svg>
<svg style="position:absolute;left:8px;top:238px" width="6" height="11" viewBox="0 0 6 11"><path d="M0 0L6 5.5L0 11Z" fill="#000"/></svg>
<div style="left:78px;top:158px;width:11px;height:11px;background:#fff;border:1px solid #a0a0a0"></div>
<div style="left:78px;top:198px;width:11px;height:11px;background:#fff;border:1px solid #a0a0a0"></div>
<div style="left:78px;top:238px;width:11px;height:11px;background:#fff;border:1px solid #a0a0a0"></div>
<div style="left:78px;top:278px;width:11px;height:11px;background:#fff;border:1px solid #a0a0a0"></div>
<span class="t" style="left:120px;top:147px;font-size:11px;line-height:11px;font-weight:400;color:#0000f0;">ЛС1</span>
<span class="t" style="left:210px;top:145px;font-size:12px;line-height:12px;font-weight:700;color:#0000f0;">Новая</span>
<span class="t" style="left:210px;top:158px;font-size:12px;line-height:12px;font-weight:700;color:#0000f0;">локаль</span>
<span class="t" style="left:210px;top:171px;font-size:12px;line-height:12px;font-weight:700;color:#0000f0;">смета</span>
<svg style="position:absolute;left:252px;top:144px" width="32" height="31" viewBox="0 0 32 31"><path d="M1 18L22 13.5L31 9L22 29L1 22Z" fill="#fbfff4"/><path d="M31 9L22 29" stroke="#5a8ee0" stroke-width="1.6"/><path d="M1 20L22 29" stroke="#2a8a6a" stroke-width="1.4"/><path d="M2 19L21 26" stroke="#90a8e8" stroke-width="1.6"/><path d="M1 17.5L14 4.5L31 1L18.5 13.5Z" fill="#3ed070" stroke="#2a9a5a" stroke-width="0.8"/><path d="M1 17.5V21" stroke="#1a3a2a" stroke-width="1.2"/><text x="14" y="21.5" font-size="8" font-style="italic" font-family="Liberation Sans" fill="#000" transform="rotate(-20 14 21)">лс</text></svg>
<span class="t" style="left:288px;top:147px;font-size:14px;line-height:14px;font-weight:700;color:#0000f0;letter-spacing:-0.2px">Новая локальная смета</span>
<span class="t" style="left:120px;top:187px;font-size:11px;line-height:11px;font-weight:400;color:#000;">1</span>
<span class="t" style="left:212px;top:187px;font-size:11px;line-height:11px;font-weight:400;color:#000;letter-spacing:-0.4px">10-01-001-01</span>
<span class="t" style="left:288px;top:187px;font-size:11px;line-height:11px;font-weight:400;color:#000;">Укрупнительная сборка и установка</span>
<span class="t" style="left:288px;top:200px;font-size:11px;line-height:11px;font-weight:400;color:#000;">конструкций арок и ферм сегментных с</span>
<span class="t" style="left:519px;top:187px;font-size:11px;line-height:11px;font-weight:400;color:#000;">ШТ</span>
<span class="t" style="left:586px;top:187px;font-size:11px;line-height:11px;font-weight:400;color:#000;">5</span>
<span class="t" style="left:638px;width:200px;text-align:right;top:187px;font-size:11px;line-height:11px;color:#000">47 273,75</span>
<span class="t" style="left:730px;width:200px;text-align:right;top:187px;font-size:11px;line-height:11px;color:#000">43 496</span>
<span class="t" style="left:797px;width:200px;text-align:right;top:187px;font-size:11px;line-height:11px;color:#000">0</span>
<span class="t" style="left:863px;width:200px;text-align:right;top:187px;font-size:11px;line-height:11px;color:#000">7 330,26</span>
<span class="t" style="left:929px;width:200px;text-align:right;top:187px;font-size:11px;line-height:11px;color:#000">2 317,64</span>
<span class="t" style="left:995px;width:200px;text-align:right;top:187px;font-size:11px;line-height:11px;color:#000">36 165,74</span>
<span class="t" style="left:1061px;width:200px;text-align:right;top:187px;font-size:11px;line-height:11px;color:#000">0</span>
<span class="t" style="left:120px;top:227px;font-size:11px;line-height:11px;font-weight:400;color:#000;">2</span>
<span class="t" style="left:212px;top:227px;font-size:11px;line-height:11px;font-weight:400;color:#000;letter-spacing:-0.4px">10-01-007-02</span>
<span class="t" style="left:288px;top:227px;font-size:11px;line-height:11px;font-weight:400;color:#000;">Рубка стен: из брусьев толщиной 150 мм</span>
<span class="t" style="left:519px;top:227px;font-size:11px;line-height:11px;font-weight:400;color:#fff;">100 м2</span>
<span class="t" style="left:586px;top:227px;font-size:11px;line-height:11px;font-weight:400;color:#000;">1,16</span>
<span class="t" style="left:638px;width:200px;text-align:right;top:227px;font-size:11px;line-height:11px;color:#000">37 973,25</span>
<span class="t" style="left:730px;width:200px;text-align:right;top:227px;font-size:11px;line-height:11px;color:#000">34 441,28</span>
<span class="t" style="left:797px;width:200px;text-align:right;top:227px;font-size:11px;line-height:11px;color:#000">0</span>
<span class="t" style="left:863px;width:200px;text-align:right;top:227px;font-size:11px;line-height:11px;color:#000">5 462,54</span>
<span class="t" style="left:929px;width:200px;text-align:right;top:227px;font-size:11px;line-height:11px;color:#000">2 166,85</span>
<span class="t" style="left:995px;width:200px;text-align:right;top:227px;font-size:11px;line-height:11px;color:#000">28 978,74</span>
<span class="t" style="left:1061px;width:200px;text-align:right;top:227px;font-size:11px;line-height:11px;color:#000">0</span>
<span class="t" style="left:120px;top:267px;font-size:11px;line-height:11px;font-weight:400;color:#000;">3</span>
<span class="t" style="left:212px;top:267px;font-size:11px;line-height:11px;font-weight:400;color:#000;letter-spacing:-0.4px">39-01-002-10</span>
<span class="t" style="left:288px;top:267px;font-size:11px;line-height:11px;font-weight:400;color:#000;">Установка закладных частей</span>
<span class="t" style="left:288px;top:280px;font-size:11px;line-height:11px;font-weight:400;color:#000;">металлических конструкций в штрабах при</span>
<span class="t" style="left:519px;top:267px;font-size:11px;line-height:11px;font-weight:400;color:#000;">т</span>
<span class="t" style="left:586px;top:267px;font-size:11px;line-height:11px;font-weight:400;color:#000;">0</span>
<span class="t" style="left:638px;width:200px;text-align:right;top:267px;font-size:11px;line-height:11px;color:#000">0</span>
<span class="t" style="left:730px;width:200px;text-align:right;top:267px;font-size:11px;line-height:11px;color:#000">0</span>
<span class="t" style="left:797px;width:200px;text-align:right;top:267px;font-size:11px;line-height:11px;color:#000">0</span>
<span class="t" style="left:863px;width:200px;text-align:right;top:267px;font-size:11px;line-height:11px;color:#000">0</span>
<span class="t" style="left:929px;width:200px;text-align:right;top:267px;font-size:11px;line-height:11px;color:#000">0</span>
<span class="t" style="left:995px;width:200px;text-align:right;top:267px;font-size:11px;line-height:11px;color:#000">0</span>
<span class="t" style="left:1061px;width:200px;text-align:right;top:267px;font-size:11px;line-height:11px;color:#000">0</span>
<div style="left:1265px;top:144px;width:28px;height:160px;overflow:hidden">
<span class="t" style="left:21px;top:43px;font-size:11px;line-height:11px">2</span>
<span class="t" style="left:26px;top:83px;font-size:11px;line-height:11px">:</span>
</div>
<div style="left:268px;top:245px;width:17px;height:17px;background:#fff"></div>
<svg style="position:absolute;left:274px;top:247px" width="9" height="15" viewBox="0 0 9 15"><path d="M4.5 2.3V6.7M2.3 4.5H6.7" stroke="#3a7a10" stroke-width="2.9" stroke-linecap="round"/><path d="M4.5 2.6V6.4M2.6 4.5H6.4" stroke="#60a818" stroke-width="1.6"/><path d="M2 12.5H7" stroke="#d83808" stroke-width="3" stroke-linecap="round"/><path d="M2.5 12.3H6.5" stroke="#f05a20" stroke-width="1"/></svg>
<div style="left:1293px;top:107px;width:17px;height:941px;background:#f0f0f0"></div>
<svg style="position:absolute;left:1297px;top:114px" width="9" height="7" viewBox="0 0 9 7"><path d="M1 5.5L4.5 2L8 5.5" stroke="#505050" stroke-width="2.2" fill="none"/></svg>
<div style="left:1294px;top:384px;width:15px;height:517px;background:#cdcdcd"></div>
<svg style="position:absolute;left:1297px;top:1035px" width="9" height="7" viewBox="0 0 9 7"><path d="M1 1.5L4.5 5L8 1.5" stroke="#505050" stroke-width="2.2" fill="none"/></svg>
<div style="left:5px;top:1048px;width:1288px;height:16px;background:#f0f0f0"></div>
<svg style="position:absolute;left:9px;top:1051px" width="7" height="9" viewBox="0 0 7 9"><path d="M5.5 1L2 4.5L5.5 8" stroke="#505050" stroke-width="2.2" fill="none"/></svg>
<div style="left:22px;top:1048px;width:17px;height:15px;background:#cdcdcd"></div>
<svg style="position:absolute;left:1283px;top:1051px" width="7" height="9" viewBox="0 0 7 9"><path d="M1.5 1L5 4.5L1.5 8" stroke="#505050" stroke-width="2.2" fill="none"/></svg>
<div style="left:1293px;top:1048px;width:17px;height:16px;background:#f0f0f0"></div>
<div style="left:1310px;top:104px;width:1px;height:962px;background:#ffffff"></div>
<div style="left:1313px;top:103px;width:1px;height:963px;background:#707070"></div>
<div style="left:1314px;top:103px;width:1px;height:963px;background:#606060"></div>
<div style="left:1310px;top:108px;width:1px;height:956px;background:#f8f8f8"></div>
<div style="left:4px;top:1064px;width:1310px;height:1px;background:#ffffff"></div>
<div style="left:75px;top:1065px;width:1239px;height:1px;background:#6a6a6a"></div>
<div style="left:75px;top:1066px;width:1239px;height:1px;background:#6a6a6a"></div>
<div style="left:1315px;top:100px;width:1px;height:987px;background:#a0a0a0"></div>
<div style="left:2px;top:1066px;width:74px;height:21px;background:#f0f0f0;border-left:1px solid #fff;border-right:1px solid #6a6a6a;border-bottom:2px solid #6a6a6a;border-bottom-right-radius:2px"></div>
<div style="left:3px;top:1068px;width:71px;height:16px;border:1px dotted #000"></div>
<span class="t" style="left:9px;top:1072px;font-size:11px;line-height:11px;font-weight:400;color:#000;">Полный вид</span>
<div style="left:76px;top:1065px;width:107px;height:20px;background:#f0f0f0;border:1px solid #6a6a6a;border-top-width:2px;border-right-width:2px;border-top-left-radius:2px"></div>
<div style="left:77px;top:1067px;width:104px;height:1px;background:#fff"></div>
<div style="left:77px;top:1067px;width:1px;height:17px;background:#fff"></div>
<span class="t" style="left:82px;top:1071px;font-size:11px;line-height:11px;font-weight:400;color:#000;">Сокращенный вид</span>
<div style="left:184px;top:1065px;width:68px;height:20px;background:#f0f0f0;border:1px solid #6a6a6a;border-top-width:2px;border-right-width:2px;border-top-left-radius:2px"></div>
<div style="left:185px;top:1067px;width:65px;height:1px;background:#fff"></div>
<div style="left:185px;top:1067px;width:1px;height:17px;background:#fff"></div>
<span class="t" style="left:190px;top:1071px;font-size:11px;line-height:11px;font-weight:400;color:#000;">Вид строки</span>
<div style="left:253px;top:1065px;width:101px;height:20px;background:#f0f0f0;border:1px solid #6a6a6a;border-top-width:2px;border-right-width:2px;border-top-left-radius:2px"></div>
<div style="left:254px;top:1067px;width:98px;height:1px;background:#fff"></div>
<div style="left:254px;top:1067px;width:1px;height:17px;background:#fff"></div>
<span class="t" style="left:259px;top:1071px;font-size:11px;line-height:11px;font-weight:400;color:#000;">Объектная смета</span>
<div style="left:355px;top:1065px;width:86px;height:20px;background:#f0f0f0;border:1px solid #6a6a6a;border-top-width:2px;border-right-width:2px;border-top-left-radius:2px"></div>
<div style="left:356px;top:1067px;width:83px;height:1px;background:#fff"></div>
<div style="left:356px;top:1067px;width:1px;height:17px;background:#fff"></div>
<span class="t" style="left:361px;top:1071px;font-size:11px;line-height:11px;font-weight:400;color:#000;">Предпросмотр</span>
<div style="left:1px;top:1088px;width:1756px;height:1px;background:#ffffff"></div>
<div style="left:3px;top:1090px;width:85px;height:27px;border-top:1px solid #a0a0a0;border-left:1px solid #a0a0a0;border-right:1px solid #fff;border-bottom:1px solid #fff"></div>
<div style="left:92px;top:1090px;width:296px;height:27px;border-top:1px solid #a0a0a0;border-left:1px solid #a0a0a0;border-right:1px solid #fff;border-bottom:1px solid #fff"></div>
<div style="left:392px;top:1090px;width:1294px;height:27px;border-top:1px solid #a0a0a0;border-left:1px solid #a0a0a0;border-right:1px solid #fff;border-bottom:1px solid #fff"></div>
<div style="left:1690px;top:1090px;width:30px;height:27px;border-top:1px solid #a0a0a0;border-left:1px solid #a0a0a0;border-right:1px solid #fff;border-bottom:1px solid #fff"></div>
<div style="left:1724px;top:1090px;width:30px;height:27px;border-top:1px solid #a0a0a0;border-left:1px solid #a0a0a0;border-right:1px solid #fff;border-bottom:1px solid #fff"></div>
<div style="left:89px;top:1088px;width:1px;height:30px;background:#a0a0a0"></div>
<div style="left:90px;top:1088px;width:1px;height:30px;background:#fff"></div>
<div style="left:389px;top:1088px;width:1px;height:30px;background:#a0a0a0"></div>
<div style="left:390px;top:1088px;width:1px;height:30px;background:#fff"></div>
<div style="left:1687px;top:1088px;width:1px;height:30px;background:#a0a0a0"></div>
<div style="left:1688px;top:1088px;width:1px;height:30px;background:#fff"></div>
<div style="left:1721px;top:1088px;width:1px;height:30px;background:#a0a0a0"></div>
<div style="left:1722px;top:1088px;width:1px;height:30px;background:#fff"></div>
<div style="left:1755px;top:1088px;width:1px;height:30px;background:#a0a0a0"></div>
<div style="left:1px;top:1117px;width:1756px;height:1px;background:#a0a0a0"></div>
<div style="left:1px;top:1118px;width:1756px;height:1px;background:#a0a0a0"></div>
<div style="left:1px;top:1119px;width:1756px;height:1px;background:#7a7a7a"></div>
<span class="t" style="left:397px;top:1097px;font-size:12px;line-height:12px;font-weight:400;color:#000;">ИТОГО (руб)</span>
<span class="t" style="left:474px;top:1097px;font-size:12px;line-height:12px;font-weight:400;color:#000;">По ЛС: 85 247</span>
<span class="t" style="left:562px;top:1097px;font-size:12px;line-height:12px;font-weight:400;color:#000;">По объекту: 85 247</span>
<svg style="position:absolute;left:1695px;top:1093px" width="20" height="20" viewBox="0 0 20 20"><circle cx="10" cy="10" r="7.9" fill="#9a9a9a"/><rect x="9" y="5" width="2.2" height="2.2" fill="#fff"/><rect x="9" y="8.5" width="2.2" height="7" fill="#fff"/><path d="M2.5 2.5L17.5 17" stroke="#ff0000" stroke-width="2.4" stroke-linecap="round"/></svg>
<span class="t" style="left:1731px;top:1097px;font-size:12px;line-height:12px;font-weight:400;color:#000;letter-spacing:-0.6px">RU</span>
<div style="left:1322px;top:109px;width:1420px;height:1px;background:#a0a0a0"></div>
<div style="left:1322px;top:110px;width:1420px;height:1px;background:#fff"></div>
<div style="left:1322px;top:112px;width:1420px;height:1px;background:#a0a0a0"></div>
<div style="left:1322px;top:113px;width:1420px;height:1px;background:#fff"></div>
<div style="left:1744px;top:105px;width:10px;height:11px;background:#f0f0f0;border-top:1px solid #fff;border-left:1px solid #fff;border-right:1px solid #808080;border-bottom:1px solid #808080"></div>
<svg style="position:absolute;left:1745px;top:106px" width="8" height="8" viewBox="0 0 8 8"><path d="M1.5 1.5L6.5 6.5M6.5 1.5L1.5 6.5" stroke="#000" stroke-width="1.1"/></svg>
<div style="left:1323px;top:119px;width:80px;height:19px;background:#f0f0f0;border-top:1px solid #fff;border-left:1px solid #fff;border-right:2px solid #808080;border-bottom:2px solid #808080"></div>
<span class="t" style="left:1323px;width:80px;text-align:center;top:123px;font-size:11px;line-height:11px;color:#000">Очистить</span>
<div style="left:1407px;top:119px;width:90px;height:19px;background:#f0f0f0;border-top:1px solid #fff;border-left:1px solid #fff;border-right:2px solid #808080;border-bottom:2px solid #808080"></div>
<span class="t" style="left:1407px;width:90px;text-align:center;top:123px;font-size:11px;line-height:11px;color:#000">Справочник</span>
<div style="left:1501px;top:122px;width:12px;height:12px;background:#fff;border-top:2px solid #808080;border-left:2px solid #808080;border-right:1px solid #fff;border-bottom:1px solid #fff"></div>
<svg style="position:absolute;left:1503px;top:124px" width="9" height="9" viewBox="0 0 9 9"><path d="M0.8 4.2L3.2 6.6L7.6 1.6" stroke="#000" stroke-width="2.2" fill="none"/></svg>
<span class="t" style="left:1520px;top:123px;font-size:11px;line-height:11px;font-weight:400;color:#000;">Добавление</span>
<div style="left:1323px;top:146px;width:318px;height:15px;background:#fff"></div>
<div style="left:1627px;top:147px;width:13px;height:13px;background:#f0f0f0"></div>
<svg style="position:absolute;left:1630px;top:152px" width="8" height="5" viewBox="0 0 8 5"><path d="M0 0H8L4 5Z" fill="#000"/></svg>
<div style="left:1647px;top:144px;width:80px;height:19px;background:#f0f0f0;border-top:1px solid #fff;border-left:1px solid #fff;border-right:2px solid #808080;border-bottom:2px solid #808080"></div>
<span class="t" style="left:1647px;width:80px;text-align:center;top:148px;font-size:11px;line-height:11px;color:#a0a0a0">Добавить</span>
<div style="left:1731px;top:147px;width:12px;height:12px;background:#f0f0f0;border-top:2px solid #808080;border-left:2px solid #808080;border-right:1px solid #fff;border-bottom:1px solid #fff"></div>
<svg style="position:absolute;left:1733px;top:149px" width="9" height="9" viewBox="0 0 9 9"><path d="M0.8 4.2L3.2 6.6L7.6 1.6" stroke="#a0a0a0" stroke-width="2.2" fill="none"/></svg>
<div style="left:1323px;top:169px;width:428px;height:210px;background:#f0f0f0;border-top:2px solid #808080;border-left:2px solid #808080;border-right:1px solid #fff;border-bottom:1px solid #fff"></div>
<div style="left:1325px;top:208px;width:88px;height:38px;background:#dcfce8"></div>
<div style="left:1717px;top:208px;width:15px;height:38px;background:#dcfce8"></div>
<div style="left:1325px;top:246px;width:88px;height:76px;background:#d8e8fc"></div>
<div style="left:1717px;top:246px;width:15px;height:76px;background:#d8e8fc"></div>
<div style="left:1325px;top:322px;width:88px;height:36px;background:#fce8e8"></div>
<div style="left:1717px;top:322px;width:15px;height:36px;background:#fce8e8"></div>
<div style="left:1415px;top:172px;width:287px;height:15px;background:#fff"></div>
<div style="left:1702px;top:172px;width:13px;height:15px;background:#f0f0f0"></div>
<svg style="position:absolute;left:1704px;top:178px" width="8" height="5" viewBox="0 0 8 5"><path d="M0 0H8L4 5Z" fill="#000"/></svg>
<div style="left:1719px;top:172px;width:12px;height:12px;background:#fff;border-top:2px solid #808080;border-left:2px solid #808080;border-right:1px solid #fff;border-bottom:1px solid #fff"></div>
<span class="t" style="left:1333px;top:174px;font-size:11px;line-height:11px;font-weight:400;color:#000;">Объем</span>
<div style="left:1415px;top:191px;width:287px;height:15px;background:#fff"></div>
<div style="left:1702px;top:191px;width:13px;height:15px;background:#f0f0f0"></div>
<svg style="position:absolute;left:1704px;top:197px" width="8" height="5" viewBox="0 0 8 5"><path d="M0 0H8L4 5Z" fill="#000"/></svg>
<div style="left:1719px;top:191px;width:12px;height:12px;background:#fff;border-top:2px solid #808080;border-left:2px solid #808080;border-right:1px solid #fff;border-bottom:1px solid #fff"></div>
<svg style="position:absolute;left:1721px;top:193px" width="9" height="9" viewBox="0 0 9 9"><path d="M0.8 4.2L3.2 6.6L7.6 1.6" stroke="#000" stroke-width="2.2" fill="none"/></svg>
<span class="t" style="left:1333px;top:193px;font-size:11px;line-height:11px;font-weight:400;color:#000;">Сметная цена</span>
<div style="left:1415px;top:210px;width:287px;height:15px;background:#fff"></div>
<div style="left:1702px;top:210px;width:13px;height:15px;background:#f0f0f0"></div>
<svg style="position:absolute;left:1704px;top:216px" width="8" height="5" viewBox="0 0 8 5"><path d="M0 0H8L4 5Z" fill="#000"/></svg>
<div style="left:1719px;top:210px;width:12px;height:12px;background:#fff;border-top:2px solid #808080;border-left:2px solid #808080;border-right:1px solid #fff;border-bottom:1px solid #fff"></div>
<svg style="position:absolute;left:1721px;top:212px" width="9" height="9" viewBox="0 0 9 9"><path d="M0.8 4.2L3.2 6.6L7.6 1.6" stroke="#000" stroke-width="2.2" fill="none"/></svg>
<span class="t" style="left:1333px;top:212px;font-size:11px;line-height:11px;font-weight:400;color:#000;">ОЗП</span>
<div style="left:1415px;top:229px;width:287px;height:15px;background:#fff"></div>
<div style="left:1702px;top:229px;width:13px;height:15px;background:#f0f0f0"></div>
<svg style="position:absolute;left:1704px;top:235px" width="8" height="5" viewBox="0 0 8 5"><path d="M0 0H8L4 5Z" fill="#000"/></svg>
<div style="left:1719px;top:229px;width:12px;height:12px;background:#fff;border-top:2px solid #808080;border-left:2px solid #808080;border-right:1px solid #fff;border-bottom:1px solid #fff"></div>
<svg style="position:absolute;left:1721px;top:231px" width="9" height="9" viewBox="0 0 9 9"><path d="M0.8 4.2L3.2 6.6L7.6 1.6" stroke="#000" stroke-width="2.2" fill="none"/></svg>
<span class="t" style="left:1333px;top:231px;font-size:11px;line-height:11px;font-weight:400;color:#000;">ТрудСтр</span>
<div style="left:1415px;top:248px;width:287px;height:15px;background:#fff"></div>
<div style="left:1702px;top:248px;width:13px;height:15px;background:#f0f0f0"></div>
<svg style="position:absolute;left:1704px;top:254px" width="8" height="5" viewBox="0 0 8 5"><path d="M0 0H8L4 5Z" fill="#000"/></svg>
<div style="left:1719px;top:248px;width:12px;height:12px;background:#fff;border-top:2px solid #808080;border-left:2px solid #808080;border-right:1px solid #fff;border-bottom:1px solid #fff"></div>
<svg style="position:absolute;left:1721px;top:250px" width="9" height="9" viewBox="0 0 9 9"><path d="M0.8 4.2L3.2 6.6L7.6 1.6" stroke="#000" stroke-width="2.2" fill="none"/></svg>
<span class="t" style="left:1333px;top:250px;font-size:11px;line-height:11px;font-weight:400;color:#000;">ЭММ</span>
<div style="left:1415px;top:267px;width:287px;height:15px;background:#fff"></div>
<div style="left:1702px;top:267px;width:13px;height:15px;background:#f0f0f0"></div>
<svg style="position:absolute;left:1704px;top:273px" width="8" height="5" viewBox="0 0 8 5"><path d="M0 0H8L4 5Z" fill="#000"/></svg>
<div style="left:1719px;top:267px;width:12px;height:12px;background:#fff;border-top:2px solid #808080;border-left:2px solid #808080;border-right:1px solid #fff;border-bottom:1px solid #fff"></div>
<svg style="position:absolute;left:1721px;top:269px" width="9" height="9" viewBox="0 0 9 9"><path d="M0.8 4.2L3.2 6.6L7.6 1.6" stroke="#000" stroke-width="2.2" fill="none"/></svg>
<span class="t" style="left:1333px;top:269px;font-size:11px;line-height:11px;font-weight:400;color:#000;">НормЭММ</span>
<div style="left:1415px;top:286px;width:287px;height:15px;background:#fff"></div>
<div style="left:1702px;top:286px;width:13px;height:15px;background:#f0f0f0"></div>
<svg style="position:absolute;left:1704px;top:292px" width="8" height="5" viewBox="0 0 8 5"><path d="M0 0H8L4 5Z" fill="#000"/></svg>
<div style="left:1719px;top:286px;width:12px;height:12px;background:#fff;border-top:2px solid #808080;border-left:2px solid #808080;border-right:1px solid #fff;border-bottom:1px solid #fff"></div>
<svg style="position:absolute;left:1721px;top:288px" width="9" height="9" viewBox="0 0 9 9"><path d="M0.8 4.2L3.2 6.6L7.6 1.6" stroke="#000" stroke-width="2.2" fill="none"/></svg>
<span class="t" style="left:1333px;top:288px;font-size:11px;line-height:11px;font-weight:400;color:#000;">ЗПМ</span>
<div style="left:1415px;top:305px;width:287px;height:15px;background:#fff"></div>
<div style="left:1702px;top:305px;width:13px;height:15px;background:#f0f0f0"></div>
<svg style="position:absolute;left:1704px;top:311px" width="8" height="5" viewBox="0 0 8 5"><path d="M0 0H8L4 5Z" fill="#000"/></svg>
<div style="left:1719px;top:305px;width:12px;height:12px;background:#fff;border-top:2px solid #808080;border-left:2px solid #808080;border-right:1px solid #fff;border-bottom:1px solid #fff"></div>
<svg style="position:absolute;left:1721px;top:307px" width="9" height="9" viewBox="0 0 9 9"><path d="M0.8 4.2L3.2 6.6L7.6 1.6" stroke="#000" stroke-width="2.2" fill="none"/></svg>
<span class="t" style="left:1333px;top:307px;font-size:11px;line-height:11px;font-weight:400;color:#000;">ТрудМаш</span>
<div style="left:1415px;top:324px;width:287px;height:15px;background:#fff"></div>
<div style="left:1702px;top:324px;width:13px;height:15px;background:#f0f0f0"></div>
<svg style="position:absolute;left:1704px;top:330px" width="8" height="5" viewBox="0 0 8 5"><path d="M0 0H8L4 5Z" fill="#000"/></svg>
<div style="left:1719px;top:324px;width:12px;height:12px;background:#fff;border-top:2px solid #808080;border-left:2px solid #808080;border-right:1px solid #fff;border-bottom:1px solid #fff"></div>
<svg style="position:absolute;left:1721px;top:326px" width="9" height="9" viewBox="0 0 9 9"><path d="M0.8 4.2L3.2 6.6L7.6 1.6" stroke="#000" stroke-width="2.2" fill="none"/></svg>
<span class="t" style="left:1333px;top:326px;font-size:11px;line-height:11px;font-weight:400;color:#000;">СтМат</span>
<div style="left:1415px;top:343px;width:287px;height:15px;background:#fff"></div>
<div style="left:1702px;top:343px;width:13px;height:15px;background:#f0f0f0"></div>
<svg style="position:absolute;left:1704px;top:349px" width="8" height="5" viewBox="0 0 8 5"><path d="M0 0H8L4 5Z" fill="#000"/></svg>
<div style="left:1719px;top:343px;width:12px;height:12px;background:#fff;border-top:2px solid #808080;border-left:2px solid #808080;border-right:1px solid #fff;border-bottom:1px solid #fff"></div>
<svg style="position:absolute;left:1721px;top:345px" width="9" height="9" viewBox="0 0 9 9"><path d="M0.8 4.2L3.2 6.6L7.6 1.6" stroke="#000" stroke-width="2.2" fill="none"/></svg>
<span class="t" style="left:1333px;top:345px;font-size:11px;line-height:11px;font-weight:400;color:#000;">НормРасхМат</span>
<div style="left:1415px;top:362px;width:287px;height:15px;background:#fff"></div>
<div style="left:1702px;top:362px;width:13px;height:15px;background:#f0f0f0"></div>
<svg style="position:absolute;left:1704px;top:368px" width="8" height="5" viewBox="0 0 8 5"><path d="M0 0H8L4 5Z" fill="#000"/></svg>
<div style="left:1719px;top:362px;width:12px;height:12px;background:#fff;border-top:2px solid #808080;border-left:2px solid #808080;border-right:1px solid #fff;border-bottom:1px solid #fff"></div>
<svg style="position:absolute;left:1721px;top:364px" width="9" height="9" viewBox="0 0 9 9"><path d="M0.8 4.2L3.2 6.6L7.6 1.6" stroke="#000" stroke-width="2.2" fill="none"/></svg>
<span class="t" style="left:1333px;top:364px;font-size:11px;line-height:11px;font-weight:400;color:#000;">Прочие</span>
<span class="t" style="left:1417px;top:212px;font-size:11px;line-height:11px;font-weight:400;color:#000;">*1,1</span>
<span class="t" style="left:1417px;top:288px;font-size:11px;line-height:11px;font-weight:400;color:#000;">*1,1</span>
<div style="left:1733px;top:171px;width:17px;height:207px;background:#e8e8e8"></div>
<div style="left:1733px;top:171px;width:16px;height:16px;background:#f0f0f0;border-top:1px solid #fff;border-left:1px solid #fff;border-right:2px solid #808080;border-bottom:2px solid #808080"></div>
<span class="t" style="left:1733px;width:16px;text-align:center;top:174px;font-size:11px;line-height:11px;color:#000"></span>
<svg style="position:absolute;left:1737px;top:177px" width="8" height="5" viewBox="0 0 8 5"><path d="M0 5H8L4 0Z" fill="#000"/></svg>
<div style="left:1733px;top:187px;width:16px;height:147px;background:#f0f0f0;border-top:1px solid #fff;border-left:1px solid #fff;border-right:2px solid #808080;border-bottom:2px solid #808080"></div>
<div style="left:1733px;top:362px;width:16px;height:16px;background:#f0f0f0;border-top:1px solid #fff;border-left:1px solid #fff;border-right:2px solid #808080;border-bottom:2px solid #808080"></div>
<span class="t" style="left:1733px;width:16px;text-align:center;top:365px;font-size:11px;line-height:11px;color:#000"></span>
<svg style="position:absolute;left:1737px;top:368px" width="8" height="5" viewBox="0 0 8 5"><path d="M0 0H8L4 5Z" fill="#000"/></svg>
<div style="left:1323px;top:391px;width:430px;height:594px;background:#fff;border-top:2px solid #808080;border-left:2px solid #808080;border-right:1px solid #f0f0f0;border-bottom:1px solid #f0f0f0"></div>
<div style="left:1735px;top:393px;width:16px;height:591px;background:#f0f0f0"></div>
<svg style="position:absolute;left:1739px;top:399px" width="9" height="6" viewBox="0 0 9 6"><path d="M1 5L4.5 1.5L8 5" stroke="#c0c0c0" stroke-width="1.6" fill="none"/></svg>
<svg style="position:absolute;left:1739px;top:972px" width="9" height="6" viewBox="0 0 9 6"><path d="M1 1L4.5 4.5L8 1" stroke="#c0c0c0" stroke-width="1.6" fill="none"/></svg>
<span class="t" style="left:1326px;top:396px;font-size:11px;line-height:11px;font-weight:400;color:#000;">Поправка: 421/пр_2020_прил.10_т.2_п.1.1_гр.3</span>
<span class="t" style="left:1326px;top:409px;font-size:11px;line-height:11px;font-weight:400;color:#000;">Наименование: Производство работ осуществляется с вредными или</span>
<span class="t" style="left:1326px;top:422px;font-size:11px;line-height:11px;font-weight:400;color:#000;">опасными условиями труда: на предприятии при наличии вредных условий</span>
<span class="t" style="left:1326px;top:435px;font-size:11px;line-height:11px;font-weight:400;color:#000;">труда, не предусматривающих сокращенную продолжительность рабочего</span>
<span class="t" style="left:1326px;top:448px;font-size:11px;line-height:11px;font-weight:400;color:#000;">времени</span>
<div style="left:1324px;top:990px;width:12px;height:12px;background:#fff;border-top:2px solid #808080;border-left:2px solid #808080;border-right:1px solid #fff;border-bottom:1px solid #fff"></div>
<span class="t" style="left:1341px;top:991px;font-size:11px;line-height:11px;font-weight:400;color:#000;">Показывать в наименовании</span>
<div style="left:1319px;top:1012px;width:437px;height:24px;background:repeating-linear-gradient(45deg,#f2f2f2 0 1px,#ececec 1px 2px)"></div>
<svg style="position:absolute;left:1316px;top:1005px" width="442" height="25" viewBox="0 0 442 25"><path d="M89 22.5L86.5 7.5H145.5L141.5 22.5Z" fill="#fff"/><path d="M3 7.5H12L16.5 22.5H82.5L86.5 7.5H442" fill="none" stroke="#6a6a6a" stroke-width="1.4"/><path d="M86.5 7.5L89 22.5H141.5L145.5 7.5" fill="none" stroke="#6a6a6a" stroke-width="1.2"/></svg>
<span class="t" style="left:1334px;top:1015px;font-size:11px;line-height:11px;font-weight:400;color:#000;">Примечание</span>
<span class="t" style="left:1406px;top:1015px;font-size:11px;line-height:11px;font-weight:400;color:#000;">Поправка</span>
<div style="left:1327px;top:1039px;width:12px;height:12px;background:#fff;border-top:2px solid #808080;border-left:2px solid #808080;border-right:1px solid #fff;border-bottom:1px solid #fff"></div>
<svg style="position:absolute;left:1329px;top:1041px" width="9" height="9" viewBox="0 0 9 9"><path d="M0.8 4.2L3.2 6.6L7.6 1.6" stroke="#000" stroke-width="2.2" fill="none"/></svg>
<span class="t" style="left:1346px;top:1040px;font-size:11px;line-height:11px;font-weight:400;color:#000;">Заменять назначенные</span>
<div style="left:1327px;top:1057px;width:207px;height:25px;background:#f0f0f0;border-top:1px solid #fff;border-left:1px solid #fff;border-right:2px solid #808080;border-bottom:2px solid #808080"></div>
<span class="t" style="left:1327px;width:207px;text-align:center;top:1064px;font-size:11px;line-height:11px;color:#a0a0a0">Применить</span>
<div style="left:1541px;top:1057px;width:207px;height:25px;background:#f0f0f0;border-top:1px solid #fff;border-left:1px solid #fff;border-right:2px solid #808080;border-bottom:2px solid #808080"></div>
<span class="t" style="left:1541px;width:207px;text-align:center;top:1064px;font-size:11px;line-height:11px;color:#a0a0a0">Отменить</span>
<div style="left:1316px;top:100px;width:441px;height:495px;border:3px solid #ff0000"></div>
<div style="left:265px;top:242px;width:24px;height:24px;border:3px solid #ff0000;border-radius:1px"></div>
</body></html>
